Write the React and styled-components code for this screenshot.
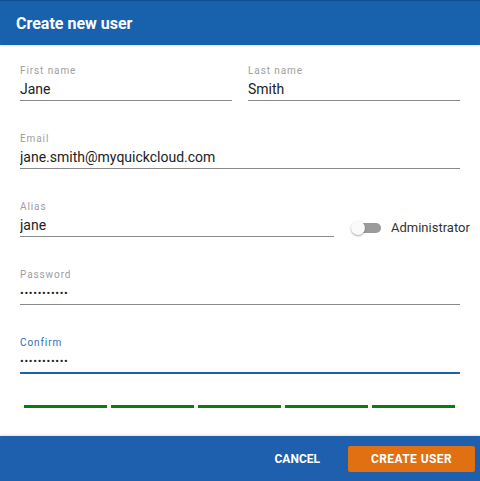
import React from 'react';
import styled, { createGlobalStyle } from 'styled-components';

const Global = createGlobalStyle`
  html, body {
    margin: 0;
    padding: 0;
    background: #fff;
  }
  body {
    font-family: Roboto, "Liberation Sans", Arial, sans-serif;
  }
`;

const Dialog = styled.div`
  width: 480px;
  height: 481px;
  display: flex;
  flex-direction: column;
  background: #fff;
  overflow: hidden;
`;

const Header = styled.div`
  height: 44px;
  border-top: 1px solid #0f4e91;
  background: #1862ad;
  display: flex;
  align-items: center;
  padding: 0 16px;
  box-shadow: 0 1px 2px rgba(0, 0, 0, 0.12);
  position: relative;
  z-index: 1;
`;

const Title = styled.h1`
  margin: 0;
  font-size: 16px;
  font-weight: 700;
  color: #fff;
`;

const Body = styled.div`
  flex: 1;
  padding: 20px 20px 0;
  display: flex;
  flex-direction: column;
`;

const Row = styled.div`
  display: flex;
  align-items: flex-end;
  gap: ${p => p.gap || 16}px;
  margin-bottom: 32px;
`;

const Field = styled.label`
  display: flex;
  flex-direction: column;
  flex: ${p => p.width ? `0 0 ${p.width}px` : 1};
`;

const Label = styled.span`
  font-size: 10px;
  line-height: 12px;
  letter-spacing: 0.9px;
  color: ${p => p.focused ? '#2f6db3' : '#9e9e9e'};
  margin-bottom: 1px;
`;

const Input = styled.input`
  border: none;
  outline: none;
  padding: 0;
  margin: 0;
  height: 22px;
  font-family: Roboto, "Liberation Sans", Arial, sans-serif;
  font-size: 14px;
  color: #212121;
  background: transparent;
  border-bottom: ${p => p.focused ? '2px solid #1d5fab' : '1px solid #8a8a8a'};
  margin-bottom: ${p => p.focused ? -1 : 0}px;
  &[type='password'] {
    font-size: 11px;
    letter-spacing: 0.7px;
  }
`;

const ToggleWrap = styled.div`
  display: flex;
  align-items: center;
  gap: 10px;
  margin-right: -7px;
  padding-bottom: 2px;
  font-size: 13px;
  color: #333;
`;

const Track = styled.div`
  width: 26px;
  height: 10px;
  border-radius: 5px;
  background: #9b9b9b;
  position: relative;
  margin-left: 3px;
`;

const Knob = styled.div`
  position: absolute;
  left: -4px;
  top: -2px;
  width: 14px;
  height: 14px;
  border-radius: 50%;
  background: #fafafa;
  box-shadow: 0 1px 2px rgba(0, 0, 0, 0.35);
`;

const Strength = styled.div`
  display: flex;
  gap: 4px;
  padding: 0 4px;
`;

const Bar = styled.div`
  width: 83px;
  height: 3px;
  background: ${p => p.on ? '#0a7d0a' : '#ddd'};
`;

const Footer = styled.div`
  height: 45px;
  background: #1e60ad;
  display: flex;
  align-items: center;
  justify-content: flex-end;
  padding-right: 5px;
  gap: 12px;
  box-shadow: 0 -1px 2px rgba(0, 0, 0, 0.12);
`;

const Button = styled.button`
  border: none;
  border-radius: 2px;
  height: 26px;
  padding: 0 ${p => p.primary ? 22 : 16}px;
  min-width: ${p => p.primary ? 127 : 0}px;
  background: ${p => p.primary ? '#e07011' : 'transparent'};
  color: #fff;
  font-family: Roboto, "Liberation Sans", Arial, sans-serif;
  font-size: 12px;
  font-weight: 700;
  letter-spacing: ${p => p.primary ? 0.4 : 0}px;
  text-transform: uppercase;
  cursor: pointer;
`;

export default function App() {
  return (
    <Dialog>
      <Global />
      <Header>
        <Title>Create new user</Title>
      </Header>
      <Body>
        <Row>
          <Field>
            <Label>First name</Label>
            <Input readOnly defaultValue="Jane" />
          </Field>
          <Field>
            <Label>Last name</Label>
            <Input readOnly defaultValue="Smith" />
          </Field>
        </Row>
        <Row>
          <Field>
            <Label>Email</Label>
            <Input readOnly defaultValue="jane.smith@myquickcloud.com" />
          </Field>
        </Row>
        <Row gap={18}>
          <Field width={314}>
            <Label>Alias</Label>
            <Input readOnly defaultValue="jane" />
          </Field>
          <ToggleWrap>
            <Track><Knob /></Track>
            Administrator
          </ToggleWrap>
        </Row>
        <Row>
          <Field>
            <Label>Password</Label>
            <Input readOnly type="password" defaultValue="secretpass1" />
          </Field>
        </Row>
        <Row>
          <Field>
            <Label focused>Confirm</Label>
            <Input readOnly focused type="password" defaultValue="secretpass1" />
          </Field>
        </Row>
        <Strength>
          {[1, 2, 3, 4, 5].map(i => <Bar key={i} on />)}
        </Strength>
      </Body>
      <Footer>
        <Button>Cancel</Button>
        <Button primary>Create user</Button>
      </Footer>
    </Dialog>
  );
}
